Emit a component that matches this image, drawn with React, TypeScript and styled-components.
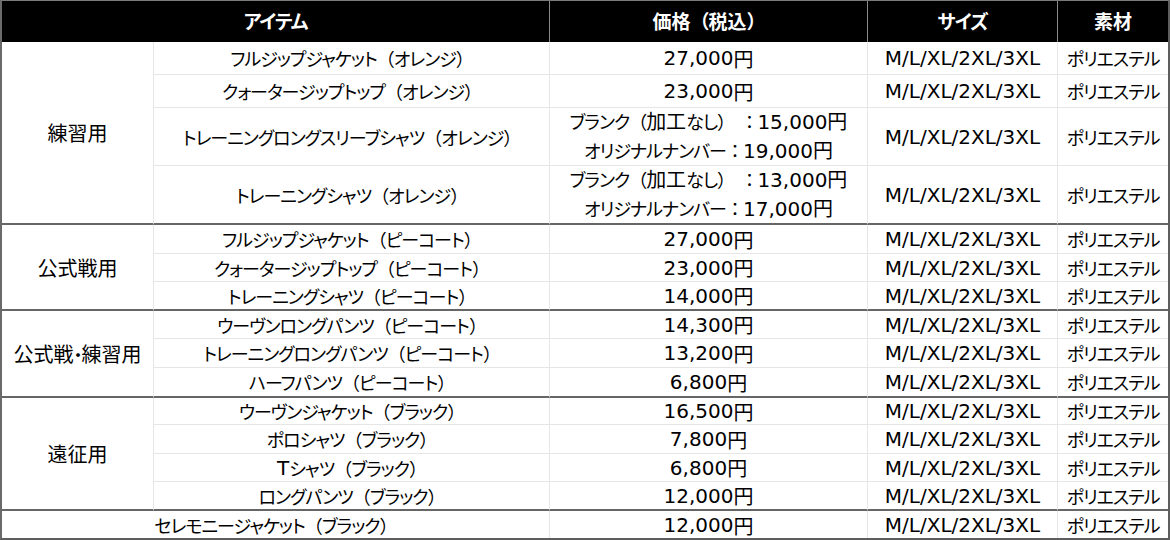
import React from "react";
import styled, { createGlobalStyle } from "styled-components";

const GlobalStyle = createGlobalStyle`
	html, body {
		margin: 0;
		padding: 0;
		background: #fff;
	}
	body {
		font-family: "DejaVu Sans", "Noto Sans CJK JP", sans-serif;
		color: #000;
	}
`;

type Item = {
	name: string;
	price: string[];
};

type Group = {
	label: string;
	items: Item[];
};

const groups: Group[] = [
	{
		label: "練習用",
		items: [
			{ name: "フルジップジャケット（オレンジ）", price: ["27,000円"] },
			{ name: "クォータージップトップ（オレンジ）", price: ["23,000円"] },
			{
				name: "トレーニングロングスリーブシャツ（オレンジ）",
				price: ["ブランク（加工なし） ：15,000円", "オリジナルナンバー：19,000円"],
			},
			{
				name: "トレーニングシャツ（オレンジ）",
				price: ["ブランク（加工なし） ：13,000円", "オリジナルナンバー：17,000円"],
			},
		],
	},
	{
		label: "公式戦用",
		items: [
			{ name: "フルジップジャケット（ピーコート）", price: ["27,000円"] },
			{ name: "クォータージップトップ（ピーコート）", price: ["23,000円"] },
			{ name: "トレーニングシャツ（ピーコート）", price: ["14,000円"] },
		],
	},
	{
		label: "公式戦・練習用",
		items: [
			{ name: "ウーヴンロングパンツ（ピーコート）", price: ["14,300円"] },
			{ name: "トレーニングロングパンツ（ピーコート）", price: ["13,200円"] },
			{ name: "ハーフパンツ（ピーコート）", price: ["6,800円"] },
		],
	},
	{
		label: "遠征用",
		items: [
			{ name: "ウーヴンジャケット（ブラック）", price: ["16,500円"] },
			{ name: "ポロシャツ（ブラック）", price: ["7,800円"] },
			{ name: "Tシャツ（ブラック）", price: ["6,800円"] },
			{ name: "ロングパンツ（ブラック）", price: ["12,000円"] },
		],
	},
];

const SIZES = "M/L/XL/2XL/3XL";
const MATERIAL = "ポリエステル";

// the sheet font has narrow kana next to wide latin, so runs get their own size
type Kind = "latin" | "kanji" | "punct" | "kana";
const RUN = /[\x20-\x7E]+|[\u4E00-\u9FFF]+|[（）：]+|[^\x20-\x7E\u4E00-\u9FFF（）：]+/g;

const kindOf = (s: string): Kind => {
	if (/^[\x20-\x7E]/.test(s)) return "latin";
	if (/^[\u4E00-\u9FFF]/.test(s)) return "kanji";
	if (/^[（）：]/.test(s)) return "punct";
	return "kana";
};

const Txt = ({ children }: { children: string }) => (
	<>
		{(children.match(RUN) || []).map((s, i) => (
			<Run key={i} $kind={kindOf(s)}>
				{s}
			</Run>
		))}
	</>
);

const App = () => {
	return (
		<>
			<GlobalStyle />
			<Frame>
				<Grid>
					<HeadCell $span={2}>
						<Txt>アイテム</Txt>
					</HeadCell>
					<HeadCell>
						<Txt>価格（税込）</Txt>
					</HeadCell>
					<HeadCell>
						<Txt>サイズ</Txt>
					</HeadCell>
					<HeadCell $last>
						<Txt>素材</Txt>
					</HeadCell>

					{groups.map((g) =>
						g.items.map((it, i) => {
							const end = i === g.items.length - 1;
							return (
								<React.Fragment key={g.label + i}>
									{i === 0 && (
										<CategoryCell $rows={g.items.length}>
											<Txt>{g.label}</Txt>
										</CategoryCell>
									)}
									<Cell $end={end}>
										<Txt>{it.name}</Txt>
									</Cell>
									<Cell $end={end}>
										{it.price.length > 1 ? (
											<PriceLines>
												{it.price.map((p) => (
													<div key={p}>
														<Txt>{p}</Txt>
													</div>
												))}
											</PriceLines>
										) : (
											<Txt>{it.price[0]}</Txt>
										)}
									</Cell>
									<Cell $end={end}>
										<Txt>{SIZES}</Txt>
									</Cell>
									<Cell $end={end} $last>
										<Txt>{MATERIAL}</Txt>
									</Cell>
								</React.Fragment>
							);
						})
					)}

					<Cell $span={2} $end $bottom>
						<Txt>セレモニージャケット（ブラック）</Txt>
					</Cell>
					<Cell $end $bottom>
						<Txt>12,000円</Txt>
					</Cell>
					<Cell $end $bottom>
						<Txt>{SIZES}</Txt>
					</Cell>
					<Cell $end $bottom $last>
						<Txt>{MATERIAL}</Txt>
					</Cell>
				</Grid>
			</Frame>
		</>
	);
};

export default App;

const Frame = styled.div`
	width: 1170px;
	height: 540px;
	box-sizing: border-box;
	border-top: 1px solid #7a7a7a;
	border-left: 2px solid #6a6a6a;
	border-right: 2px solid #5e5e5e;
	border-bottom: 2px solid #5e5e5e;
	overflow: hidden;
`;

const Grid = styled.div`
	display: grid;
	grid-template-columns: 152px 396px 318px 190px 110px;
	grid-template-rows: 41px 33px 33px 58px 59px 29px 28px 29px 28px 29px 30px 27px 29px 28px 29px 28px;
	font-size: 20px;
`;

const Run = styled.span<{ $kind: Kind }>`
	font-size: ${(p) => (p.$kind === "latin" || p.$kind === "kanji" ? "20px" : "18px")};
	letter-spacing: ${(p) => (p.$kind === "kana" || p.$kind === "punct" ? "-1px" : "0")};
	font-feature-settings: ${(p) => (p.$kind === "kana" ? '"palt"' : "normal")};
	white-space: pre;
`;

const HeadCell = styled.div<{ $span?: number; $last?: boolean }>`
	grid-column: span ${(p) => p.$span || 1};
	background: #000;
	color: #fff;
	font-weight: 700;
	display: flex;
	align-items: center;
	justify-content: center;
	border-right: ${(p) => (p.$last ? "none" : "1px solid #8a8a8a")};
	box-sizing: border-box;
	padding-bottom: 2px;
	${Run} {
		font-size: 19px;
	}
`;

const Cell = styled.div<{ $span?: number; $end?: boolean; $last?: boolean; $bottom?: boolean }>`
	grid-column: span ${(p) => p.$span || 1};
	display: flex;
	align-items: center;
	justify-content: center;
	box-sizing: border-box;
	white-space: nowrap;
	border-right: ${(p) => (p.$last ? "none" : "1px solid #e6e6e6")};
	border-bottom: ${(p) =>
		p.$bottom ? "none" : p.$end ? "2px solid #666" : "1px solid #e6e6e6"};
`;

const CategoryCell = styled.div<{ $rows: number }>`
	grid-row: span ${(p) => p.$rows};
	display: flex;
	align-items: center;
	justify-content: center;
	box-sizing: border-box;
	border-right: 1px solid #e6e6e6;
	border-bottom: 2px solid #666;
	white-space: nowrap;
`;

const PriceLines = styled.div`
	display: flex;
	flex-direction: column;
	align-items: center;
	line-height: 28px;
`;
